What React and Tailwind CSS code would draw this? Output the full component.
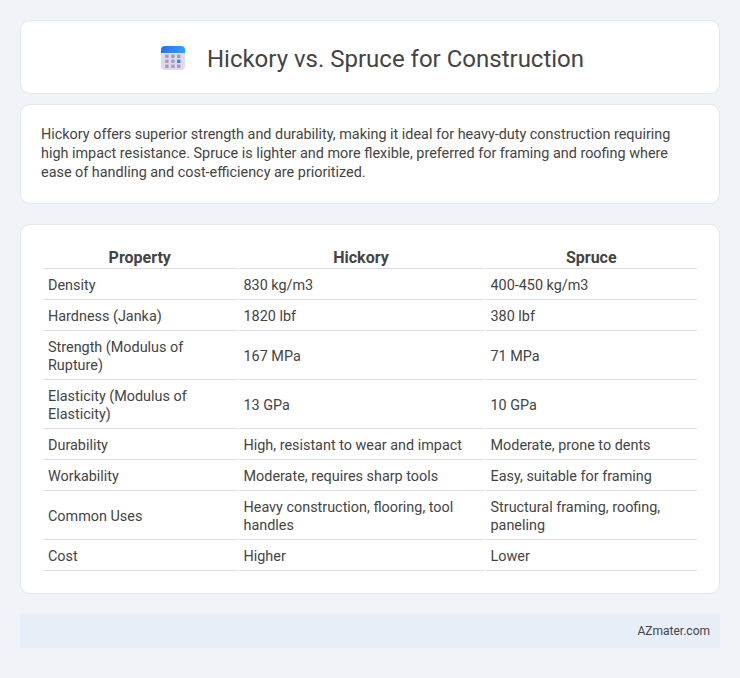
const rows = [
  ["Density", "830 kg/m3", "400-450 kg/m3"],
  ["Hardness (Janka)", "1820 lbf", "380 lbf"],
  ["Strength (Modulus of Rupture)", "167 MPa", "71 MPa"],
  ["Elasticity (Modulus of Elasticity)", "13 GPa", "10 GPa"],
  ["Durability", "High, resistant to wear and impact", "Moderate, prone to dents"],
  ["Workability", "Moderate, requires sharp tools", "Easy, suitable for framing"],
  ["Common Uses", "Heavy construction, flooring, tool handles", "Structural framing, roofing, paneling"],
  ["Cost", "Higher", "Lower"],
];

function CalendarIcon() {
  return (
    <svg width="26" height="26" viewBox="0 0 26 26" className="mb-[2px] shrink-0">
      <defs>
        <linearGradient id="top" x1="0" y1="0" x2="1" y2="0">
          <stop offset="0" stopColor="#2a6ff0" />
          <stop offset="1" stopColor="#32a0fa" />
        </linearGradient>
      </defs>
      <rect x="1" y="1" width="24" height="24" rx="4" fill="#e0d8ec" />
      <path d="M1 8V5a4 4 0 0 1 4-4h16a4 4 0 0 1 4 4v3z" fill="url(#top)" />
      <g fill="#a99bb8">
        <rect x="5.2" y="9.6" width="3.4" height="3.4" />
        <rect x="11.2" y="9.6" width="3.4" height="3.4" />
        <rect x="17" y="9.6" width="3.4" height="3.4" />
        <rect x="5.2" y="14.6" width="3.4" height="3.4" />
        <rect x="11.2" y="14.6" width="3.4" height="3.4" />
        <rect x="17" y="14.6" width="3.4" height="3.4" fill="#2d8cf0" />
        <rect x="5.2" y="19.6" width="3.4" height="3.4" />
        <rect x="11.2" y="19.6" width="3.4" height="3.4" />
        <rect x="17" y="19.6" width="3.4" height="3.4" />
      </g>
    </svg>
  );
}

export default function App() {
  return (
    <div className="min-h-[678px] bg-[#f0f3f8] px-5 pt-5 pb-[30px] font-['Roboto',sans-serif] text-[#444444]">
      <div className="flex h-[74px] items-center justify-center gap-[21px] rounded-[10px] border border-[#e2e7f0] bg-white pt-[4px] pl-[4px]">
        <CalendarIcon />
        <h1 className="text-2xl font-normal">Hickory vs. Spruce for Construction</h1>
      </div>
      <div className="mt-[10px] rounded-[10px] border border-[#e2e7f0] bg-white px-5 pt-5 pb-[21px] text-[14.4px] leading-[19px]">
        Hickory offers superior strength and durability, making it ideal for heavy-duty construction requiring high impact resistance. Spruce is lighter and more flexible, preferred for framing and roofing where ease of handling and cost-efficiency are prioritized.
      </div>
      <div className="mt-5 rounded-[10px] border border-[#e2e7f0] bg-white px-5 py-5">
        <table className="w-full border-separate border-spacing-[2px] text-[14.4px] leading-[18px]">
          <thead>
            <tr>
              <th className="w-[193.5px] border-b border-[#dddddd] text-center text-base leading-[21px] font-bold">Property</th>
              <th className="w-[245px] border-b border-[#dddddd] text-center text-base leading-[21px] font-bold">Hickory</th>
              <th className="border-b border-[#dddddd] text-center text-base leading-[21px] font-bold">Spruce</th>
            </tr>
          </thead>
          <tbody>
            {rows.map((r) => (
              <tr key={r[0]}>
                {r.map((c, i) => (
                  <td key={i} className="border-b border-[#dddddd] px-[5px] pt-[6px] pb-[4px] text-left">
                    {c}
                  </td>
                ))}
              </tr>
            ))}
          </tbody>
        </table>
      </div>
      <div className="mt-5 flex h-[34px] items-center justify-end bg-[#e8eef7] px-[10px] text-xs">
        AZmater.com
      </div>
    </div>
  );
}
